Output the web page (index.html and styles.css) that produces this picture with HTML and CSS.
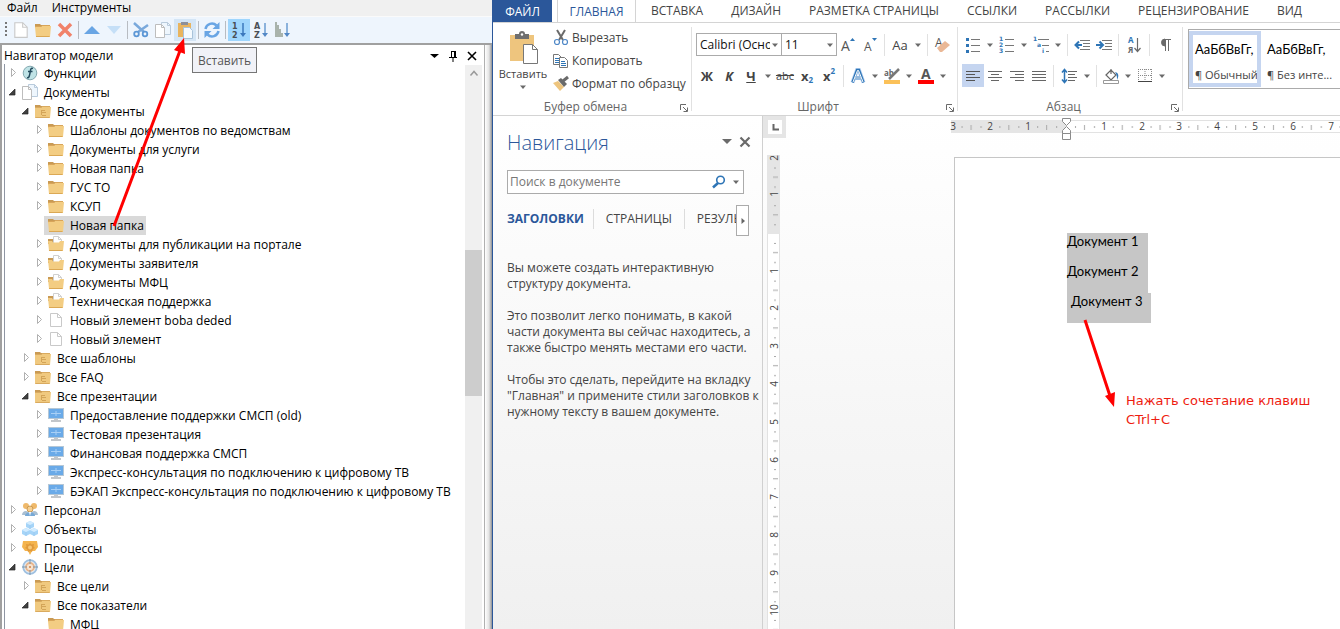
FILE: index.html
```html
<!DOCTYPE html>
<html lang="ru">
<head>
<meta charset="utf-8">
<title>Навигатор модели</title>
<link rel="stylesheet" href="styles.css">
</head>
<body>
<svg class="defs" aria-hidden="true">
  <symbol id="i-folder" viewBox="0 0 16 16"><path d="M0 2h5l1 1h9v3H0z" fill="#c99a54"/><path d="M0 5h6l1-1h9l-1 11H1z" fill="#f3cd83"/><path d="M0 4.500h6l1-1h8" stroke="#d8a55a" fill="none"/><path d="M1 14.500h13.500" stroke="#dba854"/></symbol>
  <symbol id="i-folder-list" viewBox="0 0 16 16"><path d="M0 2h5l1 1h9v3H0z" fill="#c99a54"/><path d="M0 5h6l1-1h9l-1 11H0z" fill="#f0c97f"/><path d="M0 4.500h6l1-1h8M.500 14.500h14" stroke="#d9aa5f" fill="none"/><path d="M6 7.500h4M7 9.500h4M7 12.500h4M6.500 7v5" stroke="#d3a458" fill="none"/></symbol>
  <symbol id="i-folder-doc" viewBox="0 0 16 16"><path d="M0 3h5l1 2h9v3H0z" fill="#c99a54"/><path d="M5.500 .500h5l3 3V8h-8z" fill="#fff" stroke="#d0d0d0"/><path d="M10.500 .500v3h3" fill="none" stroke="#d0d0d0"/><path d="M0 5h4l1 1.500h6L12 5h4l-1 10H1z" fill="#f3cd83"/><path d="M1 14.500h13.500" stroke="#dba854"/></symbol>
  <symbol id="i-doc" viewBox="0 0 16 16"><path d="M2.500 1.500h7l4 4v9h-11z" fill="#fff" stroke="#c9c9c9"/><path d="M9.500 1.500v4h4" fill="none" stroke="#c9c9c9"/></symbol>
  <symbol id="i-docs" viewBox="0 0 16 16"><path d="M6.500 .500h6l3 3v9h-9z" fill="#eef6fd" stroke="#b9cbdc"/><path d="M12.500 .500v3h3" fill="none" stroke="#b9cbdc"/><path d="M.500 2.500h6l3 3v10h-9z" fill="#fff" stroke="#bdbdbd"/><path d="M6.500 2.500v3h3" fill="none" stroke="#bdbdbd"/></symbol>
  <symbol id="i-func" viewBox="0 0 16 16"><circle cx="8" cy="8" r="6.800" fill="#bfe3e6" stroke="#84a9b0"/><path d="M11 3.500C8.500 2.500 8.600 5 8 8S7 13.500 5 12.500M6 6.500h4.500" fill="none" stroke="#234a5c" stroke-width="1.500"/></symbol>
  <symbol id="i-screen" viewBox="0 0 16 16"><path d="M0 1h16v11H0z" fill="#b5c7d6"/><path d="M1 2h14v9H1z" fill="#6aaae8"/><path d="M3 6.500h10M8 4v5" stroke="#a9d0f6"/><path d="M6 12h4v1h3v2H3v-2h3z" fill="#c2c6ca"/></symbol>
  <symbol id="i-people" viewBox="0 0 16 16"><path d="M0 13c0-5 7-5 7-1h2c0-4 7-4 7 1z" fill="#a9bfd2"/><circle cx="4" cy="4" r="3" fill="#efb96b"/><circle cx="12" cy="4" r="3" fill="#efb96b"/><circle cx="8" cy="7" r="3" fill="#f7d092" stroke="#c99a54"/><path d="M3 14c0-5 10-5 10 0z" fill="#77a9d6"/><path d="M7 10h2l-1 4z" fill="#fff"/></symbol>
  <symbol id="i-cubes" viewBox="0 0 16 16"><path d="M8 0l4 2v4L8 8 4 6V2zM4 7l4 2v4l-4 2-4-2V9zM12 7l4 2v4l-4 2-4-2V9z" fill="#a5d4f8"/><path d="M4 2l4 2 4-2-4-2zM0 9l4 2 4-2-4-2zM8 9l4 2 4-2-4-2z" fill="#d3ecff"/><path d="M8 4v4M4 11v4M12 11v4" stroke="#9ccaf0"/></symbol>
  <symbol id="i-process" viewBox="0 0 16 16"><path d="M1 1h14l1 6-3 4H10l-2 4-2-4H3L0 7z" fill="#f4b44e"/><path d="M8 3l1.500 1.500L12 4l-.500 2.500L13 8l-2 1-1 3-2-1-2 1-1-3-2-1 1.500-1.500L4 4l2.500.500z" fill="#e09a3c"/><circle cx="8" cy="7.500" r="2" fill="#f7c877"/></symbol>
  <symbol id="i-target" viewBox="0 0 16 16"><circle cx="8" cy="8" r="6.800" fill="#e9eff4" stroke="#9fc0e0" stroke-width="1.800"/><circle cx="8" cy="8" r="4" fill="#f6e4d2" stroke="#e8b48a" stroke-width="1.800"/><path d="M8 0v5M8 11v5M0 8h5M11 8h5" stroke="#7d95a8"/><circle cx="8" cy="8" r="1" fill="#d08040"/></symbol>
  <symbol id="i-closed" viewBox="0 0 10 12"><path d="M3.500 2.500v8l4-4z" fill="#fff" stroke="#b0b0b0"/></symbol>
  <symbol id="i-open" viewBox="0 0 10 12"><path d="M7 4v6H1z" fill="#404040" stroke="#262626" stroke-width=".700"/></symbol>
  <symbol id="i-down" viewBox="0 0 10 10"><path d="M2 3.500h6L5 7z" fill="#6a6a6a"/></symbol>
  <symbol id="i-launch" viewBox="0 0 8 8"><path d="M.500 6V.500H6M3 3l4 4M7.500 3.500v4h-4" fill="none" stroke="#6a6a6a"/></symbol>
</svg>

<main class="desktop">
  <section class="model" aria-label="Навигатор модели">
    <nav class="menu"><button>Файл</button><button>Инструменты</button></nav>
    <div class="tools" role="toolbar">
      <i class="grip"></i>
      <button class="tool" aria-label="Создать"><svg class="s18" viewBox="0 0 16 16"><use href="#i-doc"/></svg></button>
      <button class="tool" aria-label="Новая папка"><svg class="s16"><use href="#i-folder"/></svg></button>
      <button class="tool" aria-label="Удалить"><svg class="s16" viewBox="0 0 16 16"><path d="M2 2l12 12M14 2L2 14" stroke="#f1826a" stroke-width="3.500"/></svg></button>
      <i class="bar"></i>
      <button class="tool" aria-label="Вверх"><svg class="s18" viewBox="0 0 18 18"><path d="M1 13l8-8 8 8z" fill="#69a5e4"/></svg></button>
      <button class="tool" aria-label="Вниз"><svg class="s18" viewBox="0 0 18 18"><path d="M2 5h14l-7 8z" fill="#c5dff7"/></svg></button>
      <i class="bar"></i>
      <button class="tool" aria-label="Вырезать"><svg class="s16" viewBox="0 0 16 16"><path d="M1 1l10 9M15 3L5 10" stroke="#7aa9dc" stroke-width="2.500"/><circle cx="3.500" cy="12" r="2.300" fill="none" stroke="#5c97d6" stroke-width="1.800"/><circle cx="12" cy="12" r="2.300" fill="none" stroke="#5c97d6" stroke-width="1.800"/></svg></button>
      <button class="tool" aria-label="Копировать"><svg class="s16"><use href="#i-docs"/></svg></button>
      <button class="tool hot" aria-label="Вставить"><svg class="s18" viewBox="0 0 18 18"><path d="M2 2h13v14H2z" fill="#e9b45e"/><path d="M5 1h7v3H5z" fill="#8d8f98"/><path d="M7.500 6.500h6l3 3v8h-9z" fill="#f4faff" stroke="#a9c3da"/></svg></button>
      <i class="bar"></i>
      <button class="tool" aria-label="Обновить"><svg class="s18" viewBox="0 0 18 18"><path d="M2.500 8a6.500 6.500 0 0 1 11-3.500M15.500 10a6.500 6.500 0 0 1-11 3.500" fill="none" stroke="#69a5e4" stroke-width="2.500"/><path d="M16.500 1v7h-7zM1.500 17v-7h7z" fill="#69a5e4"/></svg></button>
      <i class="bar"></i>
      <button class="tool picked" aria-label="Сортировка по номеру"><svg class="s18" viewBox="0 0 18 18"><text class="tiny" x="2" y="8">1</text><text class="tiny" x="2" y="17">2</text><path d="M13 2v12" stroke="#3b78bd" stroke-width="1.500"/><path d="M10 12h6l-3 4z" fill="#3b78bd"/></svg></button>
      <button class="tool" aria-label="Сортировка по алфавиту"><svg class="s18" viewBox="0 0 18 18"><text class="tiny" x="2" y="8">A</text><text class="tiny" x="2" y="17">Z</text><path d="M13 2v12" stroke="#6a9bd0" stroke-width="1.500"/><path d="M10 12h6l-3 4z" fill="#5388c6"/></svg></button>
      <button class="tool" aria-label="Сортировка по типу"><svg class="s18" viewBox="0 0 18 18"><path d="M1 1h2v3h2v4h2v4h2v4H1z" fill="#a9b3ac"/><path d="M13 2v12" stroke="#6a9bd0" stroke-width="1.500"/><path d="M10 12h6l-3 4z" fill="#5388c6"/></svg></button>
    </div>
    <div class="dock">
      <div class="panel">
        <header class="panel-head">
          <h2>Навигатор модели</h2>
          <button aria-label="Меню"><svg class="s12" viewBox="0 0 12 12"><path d="M2 4h9L6.500 8z"/></svg></button>
          <button aria-label="Закрепить"><svg class="s12" viewBox="0 0 12 12"><path d="M4 1.500h4M4.500 1v6M7.500 1v6M8.500 1v6M2 7.500h8M6 7v5" stroke="#000" fill="none"/></svg></button>
          <button aria-label="Закрыть"><svg class="s12" viewBox="0 0 12 12"><path d="M2 2l8 8M10 2l-8 8" stroke="#000" stroke-width="1.600"/></svg></button>
        </header>
        <div class="tree-box">
          <ul class="tree" role="tree">
            <li class="l1"><svg class="tg"><use href="#i-closed"/></svg><span class="node"><svg class="s16"><use href="#i-func"/></svg>Функции</span></li>
            <li class="l1"><svg class="tg"><use href="#i-open"/></svg><span class="node"><svg class="s16"><use href="#i-docs"/></svg>Документы</span></li>
            <li class="l2"><svg class="tg"><use href="#i-open"/></svg><span class="node"><svg class="s16"><use href="#i-folder-list"/></svg>Все документы</span></li>
            <li class="l3"><svg class="tg"><use href="#i-closed"/></svg><span class="node"><svg class="s16"><use href="#i-folder"/></svg>Шаблоны документов по ведомствам</span></li>
            <li class="l3"><svg class="tg"><use href="#i-closed"/></svg><span class="node"><svg class="s16"><use href="#i-folder"/></svg>Документы для услуги</span></li>
            <li class="l3"><svg class="tg"><use href="#i-closed"/></svg><span class="node"><svg class="s16"><use href="#i-folder"/></svg>Новая папка</span></li>
            <li class="l3"><svg class="tg"><use href="#i-closed"/></svg><span class="node"><svg class="s16"><use href="#i-folder"/></svg>ГУС ТО</span></li>
            <li class="l3"><svg class="tg"><use href="#i-closed"/></svg><span class="node"><svg class="s16"><use href="#i-folder"/></svg>КСУП</span></li>
            <li class="l3"><i class="tg"></i><span class="node chosen"><svg class="s16"><use href="#i-folder"/></svg>Новая папка</span></li>
            <li class="l3"><svg class="tg"><use href="#i-closed"/></svg><span class="node"><svg class="s16"><use href="#i-folder-doc"/></svg>Документы для публикации на портале</span></li>
            <li class="l3"><svg class="tg"><use href="#i-closed"/></svg><span class="node"><svg class="s16"><use href="#i-folder-doc"/></svg>Документы заявителя</span></li>
            <li class="l3"><svg class="tg"><use href="#i-closed"/></svg><span class="node"><svg class="s16"><use href="#i-folder-doc"/></svg>Документы МФЦ</span></li>
            <li class="l3"><svg class="tg"><use href="#i-closed"/></svg><span class="node"><svg class="s16"><use href="#i-folder-doc"/></svg>Техническая поддержка</span></li>
            <li class="l3"><svg class="tg"><use href="#i-closed"/></svg><span class="node"><svg class="s16"><use href="#i-doc"/></svg>Новый элемент boba deded</span></li>
            <li class="l3"><svg class="tg"><use href="#i-closed"/></svg><span class="node"><svg class="s16"><use href="#i-doc"/></svg>Новый элемент</span></li>
            <li class="l2"><svg class="tg"><use href="#i-closed"/></svg><span class="node"><svg class="s16"><use href="#i-folder-list"/></svg>Все шаблоны</span></li>
            <li class="l2"><svg class="tg"><use href="#i-closed"/></svg><span class="node"><svg class="s16"><use href="#i-folder-list"/></svg>Все FAQ</span></li>
            <li class="l2"><svg class="tg"><use href="#i-open"/></svg><span class="node"><svg class="s16"><use href="#i-folder-list"/></svg>Все презентации</span></li>
            <li class="l3"><svg class="tg"><use href="#i-closed"/></svg><span class="node"><svg class="s16"><use href="#i-screen"/></svg>Предоставление поддержки СМСП (old)</span></li>
            <li class="l3"><svg class="tg"><use href="#i-closed"/></svg><span class="node"><svg class="s16"><use href="#i-screen"/></svg>Тестовая презентация</span></li>
            <li class="l3"><svg class="tg"><use href="#i-closed"/></svg><span class="node"><svg class="s16"><use href="#i-screen"/></svg>Финансовая поддержка СМСП</span></li>
            <li class="l3"><svg class="tg"><use href="#i-closed"/></svg><span class="node"><svg class="s16"><use href="#i-screen"/></svg>Экспресс-консультация по подключению к цифровому ТВ</span></li>
            <li class="l3"><svg class="tg"><use href="#i-closed"/></svg><span class="node"><svg class="s16"><use href="#i-screen"/></svg>БЭКАП Экспресс-консультация по подключению к цифровому ТВ</span></li>
            <li class="l1"><svg class="tg"><use href="#i-closed"/></svg><span class="node"><svg class="s16"><use href="#i-people"/></svg>Персонал</span></li>
            <li class="l1"><svg class="tg"><use href="#i-closed"/></svg><span class="node"><svg class="s16"><use href="#i-cubes"/></svg>Объекты</span></li>
            <li class="l1"><svg class="tg"><use href="#i-closed"/></svg><span class="node"><svg class="s16"><use href="#i-process"/></svg>Процессы</span></li>
            <li class="l1"><svg class="tg"><use href="#i-open"/></svg><span class="node"><svg class="s16"><use href="#i-target"/></svg>Цели</span></li>
            <li class="l2"><svg class="tg"><use href="#i-closed"/></svg><span class="node"><svg class="s16"><use href="#i-folder-list"/></svg>Все цели</span></li>
            <li class="l2"><svg class="tg"><use href="#i-open"/></svg><span class="node"><svg class="s16"><use href="#i-folder-list"/></svg>Все показатели</span></li>
            <li class="l3"><i class="tg"></i><span class="node"><svg class="s16"><use href="#i-folder"/></svg>МФЦ</span></li>
          </ul>
          <div class="scroll"><svg class="s16" viewBox="0 0 16 16"><path d="M4.500 10.500L8 6.500l3.500 4" fill="none" stroke="#9a9a9a" stroke-width="1.500"/></svg><i class="thumb"></i></div>
        </div>
      </div>
    </div>
    <div class="tip" role="tooltip">Вставить</div>
  </section>

  <section class="word" aria-label="Документ">
    <nav class="tabs">
      <button class="file">ФАЙЛ</button><button class="current">ГЛАВНАЯ</button><button>ВСТАВКА</button><button>ДИЗАЙН</button><button>РАЗМЕТКА СТРАНИЦЫ</button><button>ССЫЛКИ</button><button>РАССЫЛКИ</button><button>РЕЦЕНЗИРОВАНИЕ</button><button>ВИД</button>
    </nav>
    <div class="ribbon">
      <section class="group clip">
        <div class="clip-body">
          <button class="paste"><svg viewBox="0 0 30 32"><path d="M2 3h24v26H2z" fill="#eec57e"/><path d="M7 2h4a3 3 0 0 1 6 0h4v5H7z" fill="#6f6f6f"/><circle cx="14" cy="2.500" r="1.200" fill="#fff"/><path d="M15.500 12.500h9l5 5v14h-14z" fill="#fff" stroke="#777"/><path d="M24.500 12.500v5h5" fill="none" stroke="#777"/></svg>Вставить<svg class="s10"><use href="#i-down"/></svg></button>
          <div class="clip-list">
            <button><svg class="s16" viewBox="0 0 16 16"><path d="M4 0l6 10M12 0L6 10" stroke="#6a6a6a" stroke-width="2"/><circle cx="4" cy="12" r="2.500" fill="none" stroke="#4f88c7" stroke-width="1.200"/><circle cx="12" cy="12" r="2.500" fill="none" stroke="#4f88c7" stroke-width="1.200"/></svg>Вырезать</button>
            <button><svg class="s16" viewBox="0 0 16 16"><path d="M.500 1.500h5l3 3v7h-8z" fill="#fff" stroke="#777"/><path d="M2 5.500h4M2 7.500h4M2 9.500h4" stroke="#2e75b6"/><path d="M6.500 4.500h5l3 3v7h-8z" fill="#fff" stroke="#777"/><path d="M8 8.500h4M8 10.500h5M8 12.500h5" stroke="#2e75b6"/></svg>Копировать</button>
            <button><svg class="s16" viewBox="0 0 16 16"><path d="M0 7l5-2 6 6-4 4z" fill="#eec57e"/><path d="M5 4l3-2 6 6-3 3z" fill="#6a6a6a"/><path d="M10 5l5-4" stroke="#6a6a6a" stroke-width="3"/></svg>Формат по образцу</button>
          </div>
        </div>
        <footer>Буфер обмена<svg class="s8"><use href="#i-launch"/></svg></footer>
      </section>

      <section class="group font">
        <div class="row">
          <label class="combo wide"><input aria-label="Шрифт" value="Calibri (Основной текст)"><svg class="s10"><use href="#i-down"/></svg></label>
          <label class="combo"><input aria-label="Размер" value="11"><svg class="s10"><use href="#i-down"/></svg></label>
          <button class="w22" aria-label="Крупнее"><svg class="s16" viewBox="0 0 16 16"><text class="glyph" x="1" y="14">А</text><path d="M10 4l2.500-3L15 4z" fill="#2e75b6"/></svg></button>
          <button class="w22" aria-label="Мельче"><svg class="s16" viewBox="0 0 16 16"><text class="glyph small" x="2" y="14">А</text><path d="M10 1h5l-2.500 3z" fill="#2e75b6"/></svg></button>
          <i class="sep"></i>
          <button class="w24 txt">Аа</button><button class="drop" aria-label="Регистр"><svg class="s10"><use href="#i-down"/></svg></button>
          <i class="sep"></i>
          <button class="w22" aria-label="Очистить"><svg class="s16" viewBox="0 0 16 16"><text class="glyph small" x="1" y="10">А</text><path d="M3 11l8-7 5 4-8 7H6z" fill="#eab896"/></svg></button>
        </div>
        <div class="row">
          <button class="w22 txt b">Ж</button><button class="w22 txt b it">К</button><button class="w22 txt b un">Ч</button><button class="drop" aria-label="Вид черты"><svg class="s10"><use href="#i-down"/></svg></button><button class="w22 txt strike">abc</button><button class="w22 txt b">x<sub>2</sub></button><button class="w22 txt b">x<sup>2</sup></button>
          <i class="sep"></i>
          <button class="w22" aria-label="Эффекты"><svg class="s16" viewBox="0 0 16 16"><path d="M2.500 14.500L7 2h2l4.500 12.500M5 10h6" fill="none" stroke="#b9d3f2" stroke-width="4"/><path d="M2.500 14.500L7 2h2l4.500 12.500M5 10h6" fill="none" stroke="#2e75b6" stroke-width="2.400"/><path d="M3 14L7.500 2.500h1L13 14M5 10h6" fill="none" stroke="#fff"/></svg></button><button class="drop" aria-label="Эффекты, список"><svg class="s10"><use href="#i-down"/></svg></button>
          <button class="w22" aria-label="Выделение"><svg class="s16" viewBox="0 0 16 16"><text class="mini" x="0" y="8">ab</text><path d="M15 1L7 9l-2 2" stroke="#777" stroke-width="2.500"/><path d="M0 12h16v4H0z" fill="#fbc159"/></svg></button><button class="drop" aria-label="Выделение, список"><svg class="s10"><use href="#i-down"/></svg></button>
          <button class="w22" aria-label="Цвет текста"><svg class="s16" viewBox="0 0 16 16"><text class="glyph bold" x="3" y="11">А</text><path d="M0 12h16v4H0z" fill="#f00"/></svg></button><button class="drop" aria-label="Цвет, список"><svg class="s10"><use href="#i-down"/></svg></button>
        </div>
        <footer>Шрифт<svg class="s8"><use href="#i-launch"/></svg></footer>
      </section>

      <section class="group para">
        <div class="row">
          <button class="w22" aria-label="Маркеры"><svg class="s16" viewBox="0 0 16 16"><path d="M1 1h3v3H1zM1 7h3v3H1zM1 13h3v3H1z" fill="#2e75b6"/><path d="M6 2.500h9M6 8.500h9M6 14.500h9" stroke="#777"/></svg></button><button class="drop" aria-label="Маркеры, список"><svg class="s10"><use href="#i-down"/></svg></button>
          <button class="w22" aria-label="Нумерация"><svg class="s16" viewBox="0 0 16 16"><text class="num" x="0" y="4">1</text><text class="num" x="0" y="10">2</text><text class="num" x="0" y="16">3</text><path d="M6 2.500h9M6 8.500h9M6 14.500h9" stroke="#777"/></svg></button><button class="drop" aria-label="Нумерация, список"><svg class="s10"><use href="#i-down"/></svg></button>
          <button class="w22" aria-label="Многоуровневый"><svg class="s16" viewBox="0 0 16 16"><text class="num" x="0" y="4">1</text><text class="num" x="4" y="10">a</text><text class="num" x="9" y="16">i</text><path d="M5 2.500h11M9 8.500h7M13 14.500h3" stroke="#777"/></svg></button><button class="drop" aria-label="Уровни, список"><svg class="s10"><use href="#i-down"/></svg></button>
          <i class="sep"></i>
          <button class="w22" aria-label="Уменьшить отступ"><svg class="s16" viewBox="0 0 16 16"><path d="M6 3.500h10M9 6.500h7M9 9.500h7M6 12.500h10" stroke="#777"/><path d="M8 8H2M5 4.500L1.500 8 5 11.500" stroke="#2e75b6" stroke-width="2" fill="none"/></svg></button>
          <button class="w22" aria-label="Увеличить отступ"><svg class="s16" viewBox="0 0 16 16"><path d="M6 3.500h10M9 6.500h7M9 9.500h7M6 12.500h10" stroke="#777"/><path d="M0 8h6M3.500 4.500L7 8l-3.500 3.500" stroke="#2e75b6" stroke-width="2" fill="none"/></svg></button>
          <i class="sep"></i>
          <button class="w24" aria-label="Сортировка"><svg class="s16" viewBox="0 0 16 16"><text class="mini blue" x="2" y="6">А</text><text class="mini" x="2" y="16">Я</text><path d="M11.500 1v13M8.500 11l3 3.500 3-3.500" stroke="#6a6a6a" fill="none" stroke-width="1.200"/></svg></button>
          <i class="sep"></i>
          <button class="w24" aria-label="Знаки"><svg class="s16" viewBox="0 0 16 16"><path d="M7 2h7v1H7z" fill="#6a6a6a"/><path d="M8 2a3.500 3.500 0 0 0 0 7z" fill="#6a6a6a" stroke="#6a6a6a"/><path d="M8.500 2v12M11.500 2v12" stroke="#6a6a6a"/></svg></button>
        </div>
        <div class="row">
          <button class="w22 on" aria-label="По левому краю"><svg class="s16" viewBox="0 0 16 16"><path d="M1 3.500h14M1 6.500h9M1 9.500h14M1 12.500h9" stroke="#555"/></svg></button>
          <button class="w22" aria-label="По центру"><svg class="s16" viewBox="0 0 16 16"><path d="M1 3.500h14M4 6.500h8M1 9.500h14M4 12.500h8" stroke="#666"/></svg></button>
          <button class="w22" aria-label="По правому краю"><svg class="s16" viewBox="0 0 16 16"><path d="M1 3.500h14M6 6.500h9M1 9.500h14M6 12.500h9" stroke="#666"/></svg></button>
          <button class="w22" aria-label="По ширине"><svg class="s16" viewBox="0 0 16 16"><path d="M1 3.500h14M1 6.500h14M1 9.500h14M1 12.500h14" stroke="#666"/></svg></button>
          <i class="sep"></i>
          <button class="w24" aria-label="Интервал"><svg class="s16" viewBox="0 0 16 16"><path d="M3.500 2v12M1 4.500L3.500 1.500 6 4.500M1 11.500l2.500 3 2.500-3" stroke="#2e75b6" stroke-width="1.500" fill="none"/><path d="M7 3.500h9M7 6.500h7M7 9.500h9M7 12.500h7" stroke="#666"/></svg></button><button class="drop" aria-label="Интервал, список"><svg class="s10"><use href="#i-down"/></svg></button>
          <i class="sep"></i>
          <button class="w22" aria-label="Заливка"><svg class="s16" viewBox="0 0 16 16"><path d="M3 7l5-5 5 5-5 5zM8 6V1" fill="#fff" stroke="#666" stroke-width="1.200"/><path d="M12 4c4 1 4 4 2 8 0-3 0-5-2-8z" fill="#2e75b6"/><path d="M.500 12.500h15v3H.500z" fill="#fff" stroke="#999"/></svg></button><button class="drop" aria-label="Заливка, список"><svg class="s10"><use href="#i-down"/></svg></button>
          <button class="w22" aria-label="Границы"><svg class="s16" viewBox="0 0 16 16"><path d="M1.500 1v12M8 1v12M14.500 1v12M1 1.500h14M1 7.500h14" stroke="#888" stroke-dasharray="1 1"/><path d="M1 13.500h14" stroke="#444"/></svg></button><button class="drop" aria-label="Границы, список"><svg class="s10"><use href="#i-down"/></svg></button>
        </div>
        <footer>Абзац<svg class="s8"><use href="#i-launch"/></svg></footer>
      </section>

      <section class="styles">
        <div class="gallery">
          <button class="style active"><b>АаБбВвГг,</b><span>¶ Обычный</span></button>
          <button class="style"><b>АаБбВвГг,</b><span>¶ Без инте...</span></button>
          <button class="style"><b></b><span>Заголово...</span></button>
        </div>
      </section>
    </div>

    <div class="work">
      <aside class="nav">
        <header class="nav-head"><h1>Навигация</h1>
          <button aria-label="Параметры"><svg class="s12" viewBox="0 0 12 12"><path d="M1 2h10L6 7z" fill="#6a6a6a"/></svg></button>
          <button aria-label="Закрыть"><svg class="s12" viewBox="0 0 12 12"><path d="M1.500 .500l9 9M10.500 .500l-9 9" stroke="#6a6a6a" stroke-width="2.200"/></svg></button>
        </header>
        <label class="search"><input placeholder="Поиск в документе" aria-label="Поиск в документе"><svg class="s14" viewBox="0 0 14 14"><circle cx="8.500" cy="5" r="3.800" fill="none" stroke="#2e75b6" stroke-width="1.600"/><path d="M6 8l-5 4.500" stroke="#2e75b6" stroke-width="2.500"/></svg><svg class="s10"><use href="#i-down"/></svg></label>
        <div class="nav-tabs"><button class="sel">ЗАГОЛОВКИ</button><button>СТРАНИЦЫ</button><button>РЕЗУЛЬТАТЫ</button><button class="more" aria-label="Далее"><svg class="s10" viewBox="0 0 10 10"><path d="M3.500 2v6l3.500-3z" fill="#666"/></svg></button></div>
        <div class="help">
          <p>Вы можете создать интерактивную<br>структуру документа.</p>
          <p>Это позволит легко понимать, в какой<br>части документа вы сейчас находитесь, а<br>также быстро менять местами его части.</p>
          <p>Чтобы это сделать, перейдите на вкладку<br>"Главная" и примените стили заголовков к<br>нужному тексту в вашем документе.</p>
        </div>
      </aside>
      <div class="canvas">
        <div class="top">
          <button class="corner" aria-label="Табуляция"><svg viewBox="0 0 14 14"><path d="M5.500 4v5.500H11" fill="none" stroke="#666" stroke-width="2"/></svg></button>
          <svg class="hruler" aria-hidden="true">
            <defs><pattern id="ht" width="37.800" height="13" x="115" patternUnits="userSpaceOnUse"><path d="M9.500 6v2M28.500 6v2M18.500 5v5" stroke="#a8a8a8"/></pattern></defs>
            <rect y="0" width="100%" height="13" fill="#fff"/><rect width="115" height="13" fill="#e5e5e5"/><path d="M115 .500h600M115 12.500h600" stroke="#e2e2e2"/>
            <rect y="0" width="100%" height="13" fill="url(#ht)"/>
            <g class="rn"><text x="2" y="10">3</text><text x="39" y="10">2</text><text x="77" y="10">1</text><text x="153" y="10">1</text><text x="191" y="10">2</text><text x="228" y="10">3</text><text x="266" y="10">4</text><text x="304" y="10">5</text><text x="342" y="10">6</text><text x="380" y="10">7</text></g>
            <path d="M111.500-1.500h8v3l-4 4-4-4zM111.500 13.500v-3l4-4 4 4v3zM111.500 13.500h8v6h-8z" fill="#fff" stroke="#8a8a8a"/>
          </svg>
        </div>
        <div class="sheet">
          <svg class="vruler" aria-hidden="true">
            <defs><pattern id="vt" width="13" height="37.700" y="79" patternUnits="userSpaceOnUse"><path d="M7 9.500h2M7 28.500h2M6 18.500h5" stroke="#a8a8a8"/></pattern></defs>
            <rect width="13" height="100%" fill="#fff"/><rect width="13" height="79" fill="#e5e5e5"/><path d="M.500 79v900M12.500 79v900" stroke="#e2e2e2"/>
            <rect width="13" height="100%" fill="url(#vt)"/>
            <g class="rn"><text transform="translate(11 3)rotate(-90)">2</text><text transform="translate(11 39)rotate(-90)">1</text><text transform="translate(11 116)rotate(-90)">1</text><text transform="translate(11 153)rotate(-90)">2</text><text transform="translate(11 191)rotate(-90)">3</text><text transform="translate(11 229)rotate(-90)">4</text><text transform="translate(11 267)rotate(-90)">5</text><text transform="translate(11 305)rotate(-90)">6</text><text transform="translate(11 342)rotate(-90)">7</text><text transform="translate(11 380)rotate(-90)">8</text><text transform="translate(11 418)rotate(-90)">9</text><text transform="translate(11 455)rotate(-90)">10</text></g>
          </svg>
          <article class="page"><p>Документ 1</p><p>Документ 2</p><p class="last">Документ 3</p></article>
        </div>
      </div>
    </div>
  </section>

  <svg class="arrows" aria-hidden="true"><path d="M114 226L181 48M1085 320l25 76" stroke="#f00" stroke-width="3"/><path d="M184 38l1 16-11-4zM1114 407l-9-11 10-4z" fill="#f00"/></svg>
  <p class="note">Нажать сочетание клавиш<br>CTrl+C</p>
</main>
</body>
</html>
```
FILE: styles.css
```css
* { box-sizing: border-box; }
body { margin: 0; font: 12px/16px "Open Sans", "Noto Sans", sans-serif; color: #000; }
h1, h2, p, ul { margin: 0; padding: 0; font-weight: 400; }
ul { list-style: none; }
button, input { font: inherit; color: inherit; border: 0; padding: 0; margin: 0; background: none; }
button { display: flex; align-items: center; justify-content: center; white-space: nowrap; flex: none; }
svg { flex: none; display: block; overflow: visible; }
.defs { position: absolute; width: 0; height: 0; }
.s8 { width: 8px; height: 8px; }
.s10 { width: 10px; height: 10px; }
.s12 { width: 12px; height: 12px; }
.s14 { width: 14px; height: 14px; }
.s16 { width: 16px; height: 16px; }
.s18 { width: 18px; height: 18px; }

.desktop { position: relative; display: flex; height: 100vh; overflow: hidden; }

/* Model navigator window */
.model { position: relative; flex: none; width: 493px; display: flex; flex-direction: column; background: #eef5fd; border-right: 1px solid #2b579a; }
.menu { display: flex; gap: 14px; height: 17px; padding-left: 7px; background: #f0f0f0; border-bottom: 1px solid #fafafa; }
.tools { display: flex; align-items: center; height: 26px; padding-left: 4px; }
.grip { width: 2px; height: 16px; margin: 0 3px 0 1px; background: repeating-linear-gradient(#777 0 2px, transparent 2px 4px); }
.tool { width: 22px; height: 22px; }
.bar { width: 1px; height: 18px; background: #b8bcc2; margin: 0 2px; }
.hot { background: #d4e5f5; }
.picked { background: #9fd6fd; }
.tiny { font: 700 8px "DejaVu Sans", sans-serif; fill: #4a4f55; }
.dock { flex: 1; min-height: 0; display: flex; border-top: 2px solid #a0a0a0; border-left: 2px solid #a0a0a0; padding-right: 7px; background: linear-gradient(to left, #8f9194, #e3e3e3 3px, #fff 7px); }
.panel { flex: 1; min-width: 0; background: #fff; border-right: 1px solid #b0b0b0; display: flex; flex-direction: column; }
.panel-head { display: flex; align-items: center; gap: 7px; height: 19px; padding: 3px 6px 0 2px; flex: none; }
.panel-head h2 { flex: 1; font-size: 12px; }
.tree-box { flex: 1; min-height: 0; display: flex; margin-left: 2px; border-left: 1px solid #8f96a3; }
.tree { flex: 1; overflow: hidden; }
.tree li { display: flex; height: 19px; align-items: center; white-space: nowrap; }
.l1 { padding-left: 3px; }
.l2 { padding-left: 16px; }
.l3 { padding-left: 29px; }
.tg { width: 10px; height: 12px; flex: none; margin-bottom: 4px; }
.node { display: flex; align-items: center; gap: 6px; height: 19px; padding: 0 2px 0 4px; }
.node svg { margin-bottom: 2px; }
.chosen { background: #d9d9d9; }
.scroll { width: 17px; margin: 1px 2px 0 0; background: #f0f0f0; display: flex; flex-direction: column; align-items: center; }
.thumb { width: 100%; height: 146px; margin-top: 169px; background: #cdcdcd; }
.tip { position: absolute; left: 192px; top: 47px; padding: 5px 5px 3px; border: 1px solid #767676; background: #f1f2f7; color: #575757; }

/* Word window */
.word { flex: 1; min-width: 0; display: flex; flex-direction: column; color: #444; background: #fff; }
.tabs { display: flex; height: 23px; flex: none; overflow: hidden; border-bottom: 1px solid #d4d4d4; }
.tabs button { padding: 0 14px; height: 22px; }
.tabs .file { width: 59px; height: 23px; background: #2b579a; color: #fff; margin-right: 5px; }
.tabs .current { width: 79px; height: 23px; margin-right: 1px; padding: 0; color: #2b579a; background: #fff; border: solid #d4d4d4; border-width: 0 1px; }
.ribbon { display: flex; height: 93px; flex: none; overflow: hidden; border-bottom: 1px solid #d4d4d4; }
.group { position: relative; flex: none; display: flex; flex-direction: column; padding: 6px 4px 0; }
.group::after { content: ""; position: absolute; right: 0; top: 4px; bottom: 4px; width: 1px; background: #e1e1e1; }
.clip { width: 199px; }
.font { width: 266px; }
.para { width: 225px; }
.group footer { margin-top: auto; height: 16px; display: flex; align-items: center; justify-content: center; padding-right: 14px; color: #666; position: relative; }
.group footer svg { position: absolute; right: 0; top: 5px; }
.clip-body { display: flex; gap: 4px; }
.paste { flex-direction: column; width: 52px; font-size: 11px; }
.paste svg:first-child { width: 30px; height: 32px; margin-bottom: 2px; }
.clip-list { display: flex; flex-direction: column; align-items: flex-start; margin-top: -3px; }
.clip-list button { height: 23px; gap: 3px; }
.row { display: flex; align-items: center; height: 31px; }
.w22 { width: 22px; height: 23px; }
.w24 { width: 24px; height: 23px; }
.drop { width: 12px; height: 23px; }
.sep { flex: none; width: 1px; height: 22px; margin: 0 3px; background: #e1e1e1; }
.combo { flex: none; display: flex; align-items: center; width: 56px; height: 23px; border: 1px solid #ababab; padding: 0 1px 0 3px; margin-left: -1px; color: #111; }
.combo.wide { width: 86px; margin-left: 0; }
.combo input { width: 100%; min-width: 0; flex: 1; }
.txt { font-size: 13px; }
.b { font-weight: 700; }
.it { font-style: italic; }
.un { text-decoration: underline; }
.strike { font-size: 11px; text-decoration: line-through; }
sub, sup { font-size: 8px; line-height: 8px; margin: 3px 0; color: #2e75b6; }
sub { align-self: flex-end; }
sup { align-self: flex-start; }
.glyph { font: 14px "Open Sans", sans-serif; fill: #555; }
.glyph.small { font-size: 12px; }
.glyph.bold { font-weight: 700; }
.mini { font: 700 8px/8px "Open Sans", sans-serif; fill: #666; }
.blue { fill: #2e75b6; }
.num { font: 700 6px/6px "DejaVu Sans", sans-serif; fill: #2e75b6; }
.on { background: #c5d5f0; }
.styles { flex: 1; min-width: 0; padding: 6px 0 0 5px; }
.gallery { display: flex; gap: 1px; height: 60px; border: 1px solid #ababab; border-right: 0; overflow: hidden; padding-top: 1px; }
.style { width: 72px; height: 56px; flex-direction: column; align-items: flex-start; justify-content: flex-start; padding: 9px 0 0 5px; overflow: hidden; gap: 9px; font-size: 11px; }
.style b { height: 18px; font: 13px/18px Lato, "Open Sans", sans-serif; color: #000; }
.style.active { border: 4px solid #c5d5f0; padding: 5px 0 0 2px; }

/* Navigation pane */
.work { flex: 1; min-height: 0; display: flex; background: linear-gradient(#fff, #f0f0f0); }
.nav { flex: none; width: 270px; border-right: 1px solid #d0d0d0; padding: 14px 11px 0 14px; }
.nav-head { display: flex; align-items: center; gap: 6px; height: 26px; }
.nav-head h1 { flex: 1; font: 300 20px/26px "Open Sans", "Noto Sans", sans-serif; color: #2b579a; }
.search { display: flex; align-items: center; gap: 5px; width: 237px; height: 24px; margin-top: 14px; border: 1px solid #ababab; background: #fff; padding: 0 2px; }
.search input { flex: 1; min-width: 0; }
.search input::placeholder { color: #777; opacity: 1; }
.nav-tabs { display: flex; width: 242px; height: 32px; margin-top: 11px; padding-top: 4px; position: relative; overflow: hidden; }
.nav-tabs button { height: 20px; padding: 0 12px; border-right: 1px solid #dcdcdc; }
.nav-tabs .sel { color: #2b579a; font-weight: 700; padding: 0 9px 0 0; }
.nav-tabs .more { position: absolute; right: 0; top: 0; width: 13px; height: 31px; padding: 0; border: 1px solid #ababab; background: #fff; }
.help { padding-top: 23px; display: grid; gap: 16px; white-space: nowrap; }

/* Document canvas */
.canvas { flex: 1; min-width: 0; display: flex; flex-direction: column; }
.top { display: flex; height: 39px; flex: none; }
.corner { width: 23px; height: 22px; background: #e5e5e5; }
.corner svg { width: 14px; height: 14px; background: #fff; }
.hruler { flex: 1; min-width: 0; height: 13px; margin: 4px 0 0 165px; }
.rn { font: 10px "Open Sans", sans-serif; fill: #444; text-anchor: middle; }
.sheet { flex: 1; min-height: 0; display: flex; overflow: hidden; }
.vruler { width: 13px; height: 100%; margin-left: 4px; overflow: hidden; }
.page { flex: 1; margin: 2px 0 0 174px; padding: 75px 0 0 112px; background: #fff; border: solid #c6c6c6; border-width: 1px 0 0 1px; font: 13px/16px Lato, "Open Sans", sans-serif; color: #000; }
.page p { width: 81px; height: 30px; background: #c6c6c6; }
.page .last { width: 84px; padding-left: 4px; }

/* Annotations */
.arrows { position: absolute; left: 0; top: 0; width: 100%; height: 100%; pointer-events: none; }
.note { position: absolute; left: 1126px; top: 391px; font: 13px/19px "DejaVu Sans", sans-serif; color: #ee1c10; white-space: nowrap; }
```
